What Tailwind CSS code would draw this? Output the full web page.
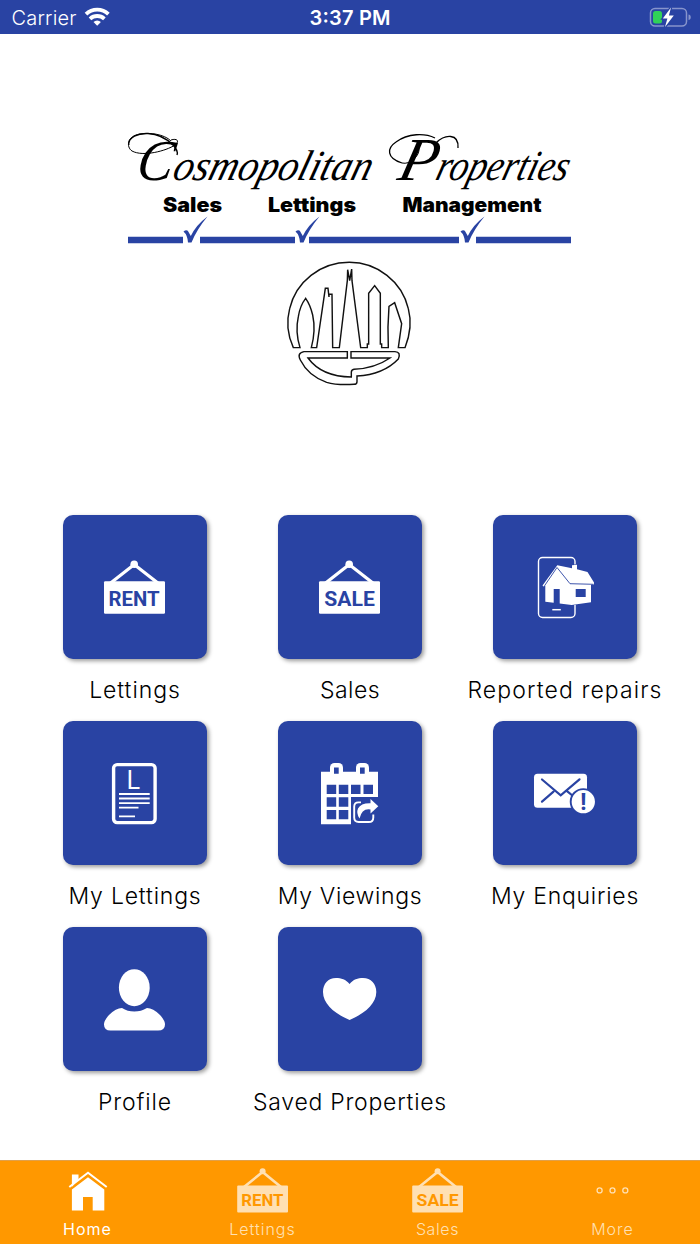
<!DOCTYPE html>
<html lang="en">
<head>
  <meta charset="UTF-8" />
  <meta name="viewport" content="width=device-width, initial-scale=1.0">
  <title>Cosmopolitan Properties</title>
  <script src="https://cdn.jsdelivr.net/npm/@tailwindcss/browser@4"></script>
</head>
<body class="bg-white font-['Inter',sans-serif] text-black">
  <div class="w-[700px] h-[1244px] flex flex-col overflow-hidden">

    <!-- Status bar -->
    <header class="h-[34px] shrink-0 bg-[#2943a3] text-white">
      <svg class="block" width="700" height="34" viewBox="0 0 700 34" fill="currentColor">
        <text x="11.500" y="25" font-size="20" font-weight="350" textLength="65">Carrier</text>
        <g fill="none" stroke="currentColor" stroke-width="3.800">
          <path d="M86 14.200a16.200 16.200 0 0 1 22.400 0" />
          <path d="M90 18.800a10.600 10.600 0 0 1 14.400 0" />
        </g>
        <path d="M97.200 25.800l-3.700-3.700a5.300 5.300 0 0 1 7.400 0z" />
        <text x="309.500" y="25" font-size="20" font-weight="600" textLength="81">3:37 PM</text>
        <rect x="650.500" y="8.500" width="36" height="17.500" rx="4.500" fill="none" stroke="#8794cc" stroke-width="1.500" />
        <path d="M688.500 14.500q2.200 0 2.200 2.700t-2.200 2.700z" fill="#8794cc" />
        <rect x="653" y="11" width="9" height="12.500" rx="2.500" fill="#30d158" />
        <path d="M671 7.500L662.800 18.500h4.600L665 27l8.800-11.500h-4.900z" stroke="#2943a3" stroke-width="2.500" paint-order="stroke" />
      </svg>
    </header>

    <main class="flex-1 flex flex-col">
      <!-- Company logo -->
      <div class="h-[481px] pt-[86px] flex justify-center">
        <svg class="overflow-visible" width="460" height="275" viewBox="120 120 460 275">
          <g font-family="Liberation Serif" font-style="italic">
            <text transform="translate(135 180) skewX(-10)" font-size="58" textLength="36" lengthAdjust="spacingAndGlyphs">C</text>
            <text transform="translate(171 179.500) skewX(-16)" font-size="43" textLength="198" lengthAdjust="spacingAndGlyphs">osmopolitan</text>
            <text transform="translate(396 180) skewX(-14)" font-size="61" textLength="38" lengthAdjust="spacingAndGlyphs">P</text>
            <text transform="translate(434 179.500) skewX(-16)" font-size="43" textLength="132" lengthAdjust="spacingAndGlyphs">roperties</text>
          </g>
          <!-- swashes of the capitals -->
          <g fill="none" stroke="#000" stroke-width="1">
            <path d="M171 141C164 134 150 132.500 140 134C127 136 126 147 132 151C143 157 166 151 175 145C180 141 177 138 171 140" />
            <path d="M128.800 145C128 137 138 133 148 133.500C158 134 167 139 173 145C177 149 178 152 177 155" stroke-width="1.400" />
            <path d="M402 163C386 158 387 148 396 142C408 133 425 133 435 138M436 143C445 134 459 133 458 148" stroke-width="1.300" />
            <path d="M402 163C410 165 420 156 419 148" />
          </g>
          <g font-family="Inter" font-weight="900" font-size="19.500">
            <text x="163" y="211.500" textLength="59" lengthAdjust="spacingAndGlyphs">Sales</text>
            <text x="268" y="211.500" textLength="88" lengthAdjust="spacingAndGlyphs">Lettings</text>
            <text x="402.500" y="211.500" textLength="139" lengthAdjust="spacingAndGlyphs">Management</text>
          </g>
          <path d="M128 240h55M200 240h95M309 240h150M476 240h95" stroke="#2943a3" stroke-width="6.300" />
          <g fill="#2943a3">
            <path id="tick" d="M183.500 231.500q2.500-2 4.300-.8l3 5.300Q196 225 207.500 216.500Q197 229 191.500 242.500h-3.500Q187.500 235 183.500 231.500z" />
            <use href="#tick" x="112" />
            <use href="#tick" x="277" />
          </g>
          <!-- skyline emblem -->
          <g transform="translate(280 255) scale(.3333)" fill="none" stroke="#111" stroke-width="4.300" stroke-linejoin="miter">
            <path d="M40 278C24 243 18 202 29 161C48 80 121 22 208 22C292 22 366 80 385 161C396 202 389 243 375 278H355L365 206L344 143L327 154Q322 215 325 278H305V267H301V115L284 92L266 115V267H262V278H242L216 77L215 42L209 77L203 44L202 77L178 278H158L156 118H147V126L144 100H136L110 278H94Q108 225 98 180Q91 150 77 130Q60 152 55 185Q45 230 60 278Z" />
            <path d="M202 290H72Q50 294 61 315Q85 363 140 382Q170 391 222 388Q231 388 231 380V363Q310 359 355 312Q364 291 345 290H213V309H330Q285 340 222 343Q214 344 214 352V366Q125 365 84 309H202Z" />
          </g>
        </svg>
      </div>

      <!-- Menu tiles -->
      <div class="w-[645px] ml-[27.5px] grid grid-cols-3 auto-rows-[206px] text-[23px] leading-[28px] font-light whitespace-nowrap">
        <div class="flex flex-col items-center">
          <div class="size-36 rounded-[10px] bg-[#2943a3] text-white shadow-[2px_2px_4px_rgba(0,0,0,0.4)]">
            <svg width="144" height="144" viewBox="0 0 144 144" fill="currentColor">
              <path d="M47 68.500L71.200 49.500L95.500 68.500" fill="none" stroke="currentColor" stroke-width="3.200" />
              <circle cx="71.200" cy="49.300" r="3.800" />
              <rect x="41" y="66.300" width="61" height="32.400" rx="1.200" />
              <text x="45.500" y="90.600" font-family="Roboto" font-weight="700" font-size="19.700" fill="#2943a3" textLength="51" lengthAdjust="spacingAndGlyphs">RENT</text>
            </svg>
          </div>
          <span class="mt-[17px] tracking-[0.95px]">Lettings</span>
        </div>
        <div class="flex flex-col items-center">
          <div class="size-36 rounded-[10px] bg-[#2943a3] text-white shadow-[2px_2px_4px_rgba(0,0,0,0.4)]">
            <svg width="144" height="144" viewBox="0 0 144 144" fill="currentColor">
              <path d="M47 68.500L71.200 49.500L95.500 68.500" fill="none" stroke="currentColor" stroke-width="3.200" />
              <circle cx="71.200" cy="49.300" r="3.800" />
              <rect x="41" y="66.300" width="61" height="32.400" rx="1.200" />
              <text x="46.300" y="90.600" font-family="Roboto" font-weight="700" font-size="19.700" fill="#2943a3" textLength="50.500" lengthAdjust="spacingAndGlyphs">SALE</text>
            </svg>
          </div>
          <span class="mt-[17px] tracking-[0.5px]">Sales</span>
        </div>
        <div class="flex flex-col items-center">
          <div class="size-36 rounded-[10px] bg-[#2943a3] text-white shadow-[2px_2px_4px_rgba(0,0,0,0.4)]">
            <svg width="144" height="144" viewBox="0 0 144 144" fill="currentColor">
              <rect x="45.500" y="42.500" width="36.500" height="60" rx="4" fill="none" stroke="currentColor" stroke-width="1.400" />
              <path d="M59.300 94.700h8.500" stroke="currentColor" stroke-width="1.500" />
              <path d="M64.300 50.300L79 53.300V50.300l5-.6V54.300L94.500 57L101 67.500V69.500L98 69.800V87.300L78.700 89.900L66.700 88.500V74h-6V87.700L52.300 86.700V70.500L50.500 71.500L49.500 70.500z" stroke="#2943a3" stroke-width="1" paint-order="stroke" />
              <path d="M82.700 74h10v8h-10z" fill="#2943a3" />
              <path d="M51.500 70.800L64 52.500L77 68.700L100.500 69.300" fill="none" stroke="#2943a3" stroke-width=".9" />
            </svg>
          </div>
          <span class="mt-[17px] tracking-[1.1px]">Reported repairs</span>
        </div>
        <div class="flex flex-col items-center">
          <div class="size-36 rounded-[10px] bg-[#2943a3] text-white shadow-[2px_2px_4px_rgba(0,0,0,0.4)]">
            <svg width="144" height="144" viewBox="0 0 144 144" fill="currentColor">
              <rect x="50.600" y="43.600" width="41.500" height="58" rx="3.500" fill="none" stroke="currentColor" stroke-width="3.400" />
              <text x="63.500" y="67.700" font-weight="400" font-size="25">L</text>
              <path d="M56 73h30.700M56 77.500h30.700M56 82.200h30.700M56 86.700h19.500M56 95.300h16" fill="none" stroke="currentColor" stroke-width="1.800" />
            </svg>
          </div>
          <span class="mt-[17px] tracking-[0.8px]">My Lettings</span>
        </div>
        <div class="flex flex-col items-center">
          <div class="size-36 rounded-[10px] bg-[#2943a3] text-white shadow-[2px_2px_4px_rgba(0,0,0,0.4)]">
            <svg width="144" height="144" viewBox="0 0 144 144" fill="currentColor">
              <path d="M43 50.700h57V76H73v27.300H43z" />
              <rect x="52" y="42" width="13" height="13" rx="4.500" />
              <rect x="78" y="42" width="13" height="13" rx="4.500" />
              <g fill="#2943a3">
                <path d="M56 46.500h4.700v6.200H56zM82 46.500h4.700v6.200H82z" />
                <path d="M48.700 63.700h9.500v9.300h-9.500zM60.800 63.700h9.500v9.300h-9.500zM73 63.700h9.500v9.300H73zM85.500 63.700h9.500v9.300h-9.500z" />
                <path d="M48.700 76.300h9.500v9.500h-9.500zM60.800 76.300h9.500v9.500h-9.500zM48.700 89h9.500v9.300h-9.500zM60.800 89h9.500v9.300h-9.500z" />
              </g>
              <path d="M83 81.400h-2.500q-4.300 0-4.300 4.300V96.500q0 4.500 4.500 4.500h10q4.600 0 4.600-4.600V93.500" fill="none" stroke="currentColor" stroke-width="1.900" />
              <path d="M92.500 78L100.300 85.200L92.500 92.500V88.500Q84 87 81.500 97.500Q78 92 80 87.500Q83 82 92.500 82.300z" />
            </svg>
          </div>
          <span class="mt-[17px] tracking-[0.65px]">My Viewings</span>
        </div>
        <div class="flex flex-col items-center">
          <div class="size-36 rounded-[10px] bg-[#2943a3] text-white shadow-[2px_2px_4px_rgba(0,0,0,0.4)]">
            <svg width="144" height="144" viewBox="0 0 144 144" fill="currentColor">
              <rect x="41" y="52.700" width="53" height="34" rx="3.500" />
              <path d="M49 58.500L67.700 74.300L86.500 58.300M49 80.700L60.500 70.600M74.300 70.300L80 75" fill="none" stroke="#2943a3" stroke-width="2.200" stroke-linecap="round" />
              <circle cx="90.300" cy="80.700" r="12.600" stroke="#2943a3" stroke-width="1.900" />
              <text x="90.300" y="89" text-anchor="middle" font-family="Roboto" font-weight="700" font-size="23" fill="#2943a3">!</text>
            </svg>
          </div>
          <span class="mt-[17px] tracking-[0.75px]">My Enquiries</span>
        </div>
        <div class="flex flex-col items-center">
          <div class="size-36 rounded-[10px] bg-[#2943a3] text-white shadow-[2px_2px_4px_rgba(0,0,0,0.4)]">
            <svg width="144" height="144" viewBox="0 0 144 144" fill="currentColor">
              <ellipse cx="71.300" cy="60.700" rx="15.400" ry="18.500" />
              <path d="M59 81Q64.500 84.500 71.300 84.500T84 81Q90 81 97 88Q102 93.500 102 97.500Q102 103.500 95 103.500H47.500Q41 103.500 41 97.500Q41 93.500 46 88Q53 81 59 81z" />
            </svg>
          </div>
          <span class="mt-[17px] tracking-[0.85px]">Profile</span>
        </div>
        <div class="flex flex-col items-center">
          <div class="size-36 rounded-[10px] bg-[#2943a3] text-white shadow-[2px_2px_4px_rgba(0,0,0,0.4)]">
            <svg width="144" height="144" viewBox="0 0 144 144" fill="currentColor">
              <path d="M71.600 57C75 52.500 80 51 85 51C93 51 98.300 57 98.300 65C98.300 77 86 87 71.600 93C57 87 45 77 45 65C45 57 50 51 58 51C63 51 68 52.500 71.600 57z" />
            </svg>
          </div>
          <span class="mt-[17px] tracking-[0.75px]">Saved Properties</span>
        </div>
      </div>
    </main>

    <!-- Tab bar -->
    <nav class="h-[84px] shrink-0 grid grid-cols-4 bg-[#ff9800] border-t border-[#e0a04a] text-white text-[16px] leading-5">
      <div class="flex flex-col items-center">
        <svg width="60" height="58" viewBox="0 0 60 58" fill="currentColor">
          <path d="M13.900 26V13.500h6.600V18z" />
          <path d="M11.300 26L30 11.800L48.700 26" fill="none" stroke="currentColor" stroke-width="2" />
          <path d="M30 16.300L46.300 28.500V49.500H34.700V36H25V49.500H13.900V28.500z" />
        </svg>
        <span class="tracking-[1px]">Home</span>
      </div>
      <div class="flex flex-col items-center text-[#ffe0b3]">
        <svg width="60" height="58" viewBox="0 0 60 58" fill="currentColor">
          <path d="M11 26L29.600 11L48 26" fill="none" stroke="currentColor" stroke-width="2.600" />
          <circle cx="29.600" cy="10.300" r="3" />
          <rect x="4.200" y="24.600" width="50.800" height="27" rx="1" />
          <text x="8.300" y="45" font-family="Roboto" font-weight="700" font-size="17" fill="#ff9800" textLength="42" lengthAdjust="spacingAndGlyphs">RENT</text>
        </svg>
        <span class="font-light tracking-[1px]">Lettings</span>
      </div>
      <div class="flex flex-col items-center text-[#ffe0b3]">
        <svg width="60" height="58" viewBox="0 0 60 58" fill="currentColor">
          <path d="M11 26L29.600 11L48 26" fill="none" stroke="currentColor" stroke-width="2.600" />
          <circle cx="29.600" cy="10.300" r="3" />
          <rect x="4.200" y="24.600" width="50.800" height="27" rx="1" />
          <text x="8.600" y="45" font-family="Roboto" font-weight="700" font-size="17" fill="#ff9800" textLength="42" lengthAdjust="spacingAndGlyphs">SALE</text>
        </svg>
        <span class="font-light tracking-[0.6px]">Sales</span>
      </div>
      <div class="flex flex-col items-center text-[#ffe0b3]">
        <svg width="60" height="58" viewBox="0 0 60 58" fill="none" stroke="currentColor" stroke-width="1.300">
          <circle cx="16.600" cy="29.400" r="2.500" />
          <circle cx="29.500" cy="29.400" r="2.500" />
          <circle cx="42.300" cy="29.400" r="2.500" />
        </svg>
        <span class="font-light tracking-[1px]">More</span>
      </div>
    </nav>
  </div>
</body>
</html>
